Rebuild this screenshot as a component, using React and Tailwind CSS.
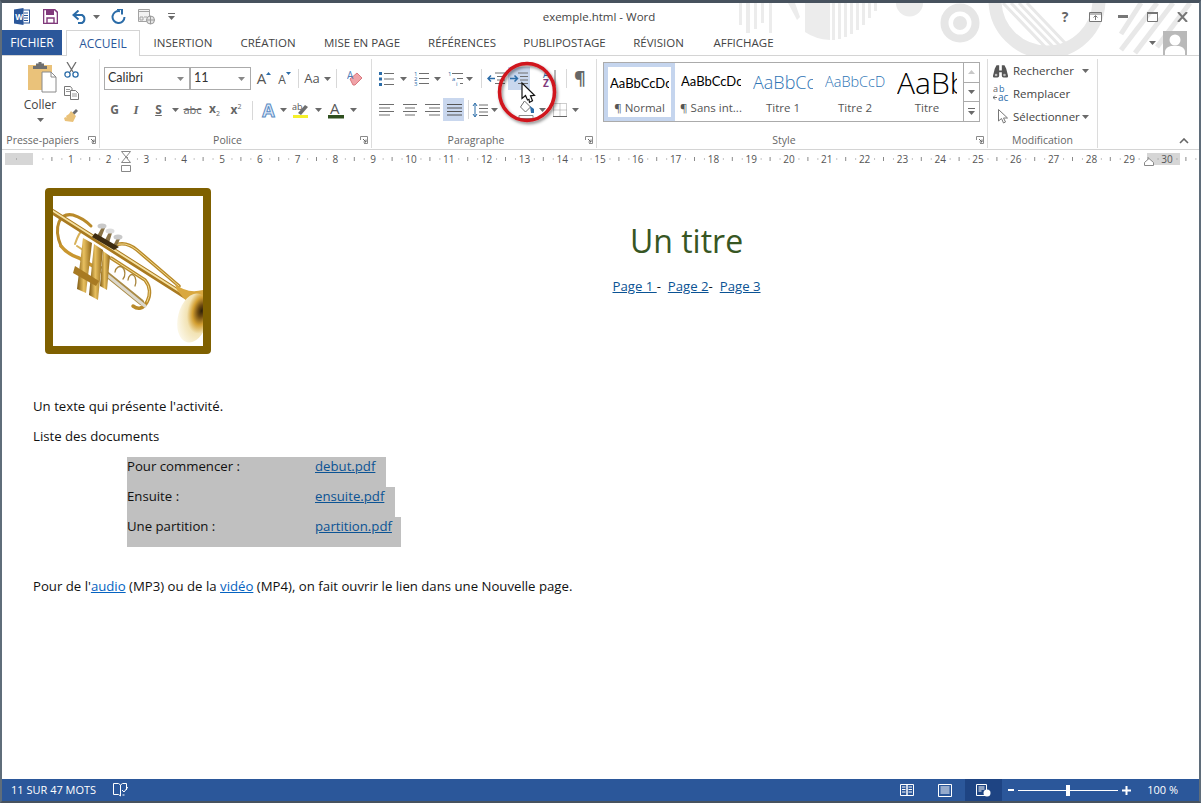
const Caret = ({ c = "#6a6a6a" }) => (
  <svg width="7" height="4" viewBox="0 0 7 4" className="shrink-0"><path d="M0 0h7L3.5 4z" fill={c} /></svg>
);

const Slot = ({ w, children, className = "" }) => (
  <div className={`flex items-center justify-center shrink-0 h-full ${className}`} style={{ width: w }}>{children}</div>
);

const Sep = () => <div className="w-px h-[19px] self-center bg-[#d8d8d8] shrink-0" />;

// paragraph icons are all rows of thin lines
const Lines = ({ rows, stroke = "#6e6e6e" }) => (
  <svg width="16" height="14" viewBox="0 0 16 14">
    {rows.map((r, i) => (
      <path key={i} d={`M${r[0]} ${1.5 + i * 3.5}H${r[1]}`} stroke={stroke} strokeWidth="1" fill="none" />
    ))}
  </svg>
);

function WordIcon() {
  return (
    <svg width="16" height="17" viewBox="0 0 16 17">
      <rect x="6" y="2" width="9.5" height="13" fill="#fff" stroke="#2b579a" />
      <path d="M10 5h4M10 7.5h4M10 10h4M10 12.5h4" stroke="#2b579a" />
      <path d="M0 1.5 9.5 0v17L0 15.5z" fill="#2b579a" />
      <text x="1.2" y="11.5" fontSize="8" fontWeight="700" fill="#fff" fontFamily="Open Sans, sans-serif">W</text>
    </svg>
  );
}

function TitleArt() {
  return (
    <svg className="absolute left-0 top-0 pointer-events-none" width="1197" height="52" viewBox="2 3 1197 52">
      <g fill="#ececec">
        <path d="M739 3h3v22h-3zM746 3h4v30h-4zM754 3h3v26h-3zM761 3h3v20h-3zM769 3h3v30h-3z" />
        <path d="M788 3h7l5 14-3 3z" />
        <path d="M805 3h25v37q-15-1-25-8z" />
        <path d="M832 3h3v37h-3zM838 3h3v36h-3zM844 3h3v34h-3zM850 3h3v31h-3zM856 3h3v27h-3zM862 3h3v22h-3zM868 3h3v15h-3zM874 3h3v8h-3z" />
        <path d="M896 3h27a13 13 0 0 1-27 0z" />
      </g>
      <circle cx="960" cy="23" r="15.5" fill="none" stroke="#e6e6e6" strokeWidth="8" />
      <circle cx="960" cy="23" r="7" fill="#e6e6e6" />
      <circle cx="1047" cy="0" r="52" fill="none" stroke="#e8e8e8" strokeWidth="13" />
      <g stroke="#e8e8e8" strokeWidth="3" fill="none">
        <path d="M1003 3l50 52M1011 3l50 52M1019 3l43 45M1027 3l40 42" />
      </g>
      <g stroke="#e8e8e8" strokeWidth="5" fill="none">
        <path d="M1141 3l-20 31M1157 3l-36 47M1173 3l-38 50M1190 3l-33 44" />
      </g>
    </svg>
  );
}

function TitleBar() {
  return (
    <div className="flex h-[27px] items-center shrink-0 relative">
      <div className="w-[502px] flex items-center shrink-0 h-full">
        <Slot w={38} className="pl-[1px]"><WordIcon /></Slot>
        <Slot w={20}>
          <svg width="15" height="15" viewBox="0 0 15 15">
            <path d="M.5.5h11l3 3v11H.5z" fill="none" stroke="#80397b" strokeWidth="1.6" />
            <path d="M3 1h8v5H3z" fill="#80397b" />
            <path d="M4 9h7v5.5H4z" fill="none" stroke="#80397b" strokeWidth="1.4" />
          </svg>
        </Slot>
        <Slot w={24} className="ml-[8px]">
          <svg width="16" height="14" viewBox="0 0 16 14">
            <path d="M2 5h8a4.5 4.5 0 0 1 0 8H6" fill="none" stroke="#2b6ca8" strokeWidth="2" />
            <path d="M6.5.5 1.5 5l5 4.5" fill="none" stroke="#2b6ca8" strokeWidth="2" />
          </svg>
        </Slot>
        <Slot w={8}><Caret /></Slot>
        <Slot w={20} className="ml-[8px]">
          <svg width="15" height="15" viewBox="0 0 15 15">
            <path d="M9 2.2A6 6 0 1 0 13.5 8" fill="none" stroke="#2b6ca8" strokeWidth="2" />
            <path d="M6 0h5v5.5" fill="none" stroke="#2b6ca8" strokeWidth="2" />
          </svg>
        </Slot>
        <Slot w={20} className="ml-[9px]">
          <svg width="18" height="17" viewBox="0 0 18 17">
            <path d="M.5 1.5h11v12H.5z" fill="#f2f2f2" stroke="#a3a3a3" />
            <path d="M.5 3.5h11M2 9h3v3H2zM6 9h3" stroke="#a3a3a3" fill="none" />
            <circle cx="12.5" cy="12" r="4" fill="#e6e6e6" stroke="#9a9a9a" />
            <path d="M8.5 12h8M12.5 8v8" stroke="#9a9a9a" />
          </svg>
        </Slot>
        <Slot w={12} className="ml-[8px]">
          <svg width="7" height="7" viewBox="0 0 7 7"><path d="M0 0h7v1H0zM0 3h7L3.5 7z" fill="#6a6a6a" /></svg>
        </Slot>
      </div>
      <div className="w-[190px] text-center text-[11.5px] text-[#444] shrink-0 relative">exemple.html - Word</div>
      <div className="flex-1 flex items-center justify-end h-full pr-[11px] relative">
        <span className="w-[20px] text-center text-[14px] font-bold text-[#666]">?</span>
        <Slot w={14} className="ml-[13px]">
          <svg width="13" height="10" viewBox="0 0 13 10"><path d="M.5.5h12v9H.5z" fill="#fff" stroke="#777" /><path d="M.5 2h12M6.5 8V4M4.5 5.5l2-2 2 2" stroke="#777" fill="none" /></svg>
        </Slot>
        <Slot w={10} className="ml-[16px]">
          <svg width="10" height="3" viewBox="0 0 10 3"><path d="M0 0h10v3H0z" fill="#777" /></svg>
        </Slot>
        <Slot w={11} className="ml-[19px]">
          <svg width="11" height="10" viewBox="0 0 11 10"><path d="M.5.5h10v9H.5z" fill="none" stroke="#777" /><path d="M0 0h11v2H0z" fill="#777" /></svg>
        </Slot>
        <Slot w={12} className="ml-[18px]">
          <svg width="11" height="10" viewBox="0 0 11 10"><path d="M1 0l9 10M10 0 1 10" stroke="#777" strokeWidth="2" fill="none" /></svg>
        </Slot>
      </div>
    </div>
  );
}

const tabs = [
  ["INSERTION", 86],
  ["CRÉATION", 84],
  ["MISE EN PAGE", 104],
  ["RÉFÉRENCES", 96],
  ["PUBLIPOSTAGE", 109],
  ["RÉVISION", 79],
  ["AFFICHAGE", 91],
];

function Tabs() {
  return (
    <div className="flex h-[25px] items-stretch shrink-0 relative">
      <div className="w-[60px] bg-[#2b579a] text-white text-[12px] flex items-center justify-center">FICHIER</div>
      <div className="ml-[4px] w-[74px] bg-white border border-b-0 border-[#d4d4d4] text-[#2b579a] text-[12px] flex items-center justify-center h-[26px] z-10">ACCUEIL</div>
      {tabs.map(([t, w]) => (
        <div key={t} className="text-[11.5px] text-[#444] flex items-center justify-center" style={{ width: w }}>{t}</div>
      ))}
      <div className="flex-1 flex items-center justify-end pr-[12px]">
        <Caret />
        <div className="ml-[7px] w-[24px] h-[24px] bg-[#b9b9b9] overflow-hidden">
          <svg width="24" height="24" viewBox="0 0 24 24">
            <circle cx="12" cy="9" r="5.5" fill="#fff" />
            <path d="M2 24v-4q1-4 6-5h8q5 1 6 5v4z" fill="#fff" />
          </svg>
        </div>
      </div>
    </div>
  );
}

function Launcher() {
  return (
    <svg width="8" height="8" viewBox="0 0 8 8" className="absolute right-[3px] top-[3px]">
      <path d="M.5 4V.5H7.5V7.5H4" fill="none" stroke="#8a8a8a" />
      <path d="M3 3l3 3M6 3.5V6H3.5" fill="none" stroke="#666" />
    </svg>
  );
}

function Group({ w, label, launcher, children }) {
  return (
    <div className="flex flex-col shrink-0 h-[89px] mt-[3px] border-r border-[#dcdcdc]" style={{ width: w }}>
      <div className="flex-1 min-h-0">{children}</div>
      <div className={`h-[14px] relative text-center text-[10.5px] leading-[14px] text-[#666] mb-[1px] ${launcher ? "pr-[16px]" : ""}`}>
        {label}
        {launcher && <Launcher />}
      </div>
    </div>
  );
}

function Clipboard() {
  return (
    <div className="flex h-full pl-[16px] pt-[3px]">
      <div className="w-[44px] flex flex-col items-center">
        <svg width="30" height="31" viewBox="0 0 30 31" className="ml-[6px]">
          <path d="M0 3h24v25H0z" fill="#eac27a" />
          <path d="M8 4V1.5h2.5V0h3v1.5H16V4h3v3H5V4z" fill="#6f6f6f" />
          <path d="M14 10h9l5 5v15H14z" fill="#fff" stroke="#8a8a8a" />
          <path d="M23 10v5h5" fill="none" stroke="#8a8a8a" />
        </svg>
        <div className="text-[12px] leading-[16px] text-[#444] mt-[4px]">Coller</div>
        <div className="mt-[5px]"><Caret /></div>
      </div>
      <div className="-ml-[3px] w-[24px] flex flex-col items-center gap-[8px] pt-[0px]">
        <svg width="15" height="16" viewBox="0 0 15 16">
          <path d="M3 0l6 10M12 0 6 10" stroke="#6e6e6e" strokeWidth="1.3" fill="none" />
          <circle cx="3.5" cy="12.5" r="2.6" fill="none" stroke="#2b6ca8" strokeWidth="1.3" />
          <circle cx="11.5" cy="12.5" r="2.6" fill="none" stroke="#2b6ca8" strokeWidth="1.3" />
        </svg>
        <svg width="15" height="14" viewBox="0 0 15 14">
          <path d="M.5.5h6l1.5 2v7H.5z" fill="#fff" stroke="#777" />
          <path d="M6.5 4.5h5l3 3v6h-8z" fill="#fff" stroke="#777" />
          <path d="M2 3.5h4M2 5.5h4M8 8h5M8 10h5" stroke="#999" />
        </svg>
        <svg width="16" height="15" viewBox="0 0 16 15">
          <path d="M9 5l4-4 2 2-4 4z" fill="#6e6e6e" />
          <path d="M8 3l5 5-3 6-8-1-1-3 2-1 1 1-1-2 3-2z" fill="#eac27a" />
        </svg>
      </div>
    </div>
  );
}

function Combo({ w, text }) {
  return (
    <div className="h-[23px] flex items-center border border-[#ababab] bg-white pl-[3px] pr-[5px] text-[12.5px] text-[#333] shrink-0 justify-between font-['Lato',sans-serif]" style={{ width: w }}>
      <span>{text}</span><Caret c="#888" />
    </div>
  );
}

function Police() {
  return (
    <div className="pl-[4px] pt-[8px]">
      <div className="flex h-[23px] items-center">
        <Combo w={86} text="Calibri" />
        <Combo w={61} text="11" />
        <Slot w={22} className="ml-[1px] pl-[2px]">
          <span className="text-[15px] text-[#555]">A</span>
          <svg width="5" height="3" viewBox="0 0 5 3" className="-mt-[10px]"><path d="M0 3h5L2.5 0z" fill="#2b6ca8" /></svg>
        </Slot>
        <Slot w={21}>
          <span className="text-[12px] text-[#555] mt-[3px]">A</span>
          <svg width="5" height="3" viewBox="0 0 5 3" className="-mt-[10px]"><path d="M0 0h5L2.5 3z" fill="#2b6ca8" /></svg>
        </Slot>
        <div className="w-[3px]" /><Sep />
        <Slot w={37} className="gap-[4px]">
          <span className="text-[13px] text-[#555]">Aa</span><Caret />
        </Slot>
        <Sep />
        <Slot w={30} className="pl-[5px]">
          <svg width="16" height="17" viewBox="0 0 16 17">
            <path d="M3 9l7-6 5 5-7 7-2 0z" fill="#f0a3a8" stroke="#d9777e" />
            <text x="0" y="9" fontSize="10" fill="#4d7db8" fontFamily="Open Sans, sans-serif">A</text>
          </svg>
        </Slot>
      </div>
      <div className="flex h-[20px] items-center mt-[10px] text-[#666]">
        <Slot w={21}><span className="text-[12px] font-bold">G</span></Slot>
        <Slot w={22}><span className="text-[13px] italic font-['Liberation_Serif',serif] font-bold">I</span></Slot>
        <Slot w={23}><span className="text-[12px] font-bold underline">S</span></Slot>
        <Slot w={11}><Caret /></Slot>
        <Slot w={23}><span className="text-[11px] line-through">abc</span></Slot>
        <Slot w={21}><span className="text-[12px] font-bold">x<span className="text-[7px] font-normal align-sub">2</span></span></Slot>
        <Slot w={22}><span className="text-[12px] font-bold">x<span className="text-[7px] font-normal align-super">2</span></span></Slot>
        <div className="w-[5px]" /><Sep />
        <Slot w={26} className="pl-[5px]">
          <span className="text-[18px] leading-none font-bold text-[#dfeaf8] [-webkit-text-stroke:1px_#5b8cc4]">A</span>
        </Slot>
        <Slot w={9}><Caret /></Slot>
        <Slot w={26}>
          <svg width="18" height="18" viewBox="0 0 18 18">
            <text x="0" y="9" fontSize="9" fill="#555" fontFamily="Open Sans, sans-serif">ab</text>
            <path d="M6 12l7-8 3 2-7 8z" fill="#6e6e6e" />
            <path d="M1 14h15v3H1z" fill="#f5f02a" />
          </svg>
        </Slot>
        <Slot w={9}><Caret /></Slot>
        <Slot w={26}>
          <svg width="16" height="18" viewBox="0 0 16 18">
            <text x="2" y="13" fontSize="15" fill="#555" fontFamily="Open Sans, sans-serif">A</text>
            <path d="M0 14h16v3.5H0z" fill="#2f4f1f" />
          </svg>
        </Slot>
        <Slot w={9}><Caret /></Slot>
      </div>
    </div>
  );
}

const BulletIcon = () => (
  <svg width="15" height="14" viewBox="0 0 15 14">
    <path d="M0 0h3v3H0zM0 5.5h3v3H0zM0 11h3v3H0z" fill="#2b6ca8" />
    <path d="M5 1.5h10M5 7h10M5 12.5h10" stroke="#6e6e6e" />
  </svg>
);
const NumIcon = () => (
  <svg width="15" height="15" viewBox="0 0 15 15">
    <text x="0" y="5" fontSize="6" fill="#2b6ca8" fontFamily="Open Sans, sans-serif">1</text>
    <text x="0" y="10" fontSize="6" fill="#2b6ca8" fontFamily="Open Sans, sans-serif">2</text>
    <text x="0" y="15" fontSize="6" fill="#2b6ca8" fontFamily="Open Sans, sans-serif">3</text>
    <path d="M5 2.5h10M5 7.5h10M5 12.5h10" stroke="#6e6e6e" />
  </svg>
);
const MultiIcon = () => (
  <svg width="15" height="15" viewBox="0 0 15 15">
    <text x="0" y="5" fontSize="6" fill="#2b6ca8" fontFamily="Open Sans, sans-serif">1</text>
    <text x="4" y="10" fontSize="6" fill="#2b6ca8" fontFamily="Open Sans, sans-serif">a</text>
    <text x="8" y="15" fontSize="6" fill="#2b6ca8" fontFamily="Open Sans, sans-serif">i</text>
    <path d="M4 2.5h11M9 7.5h6M12 12.5h3" stroke="#6e6e6e" />
  </svg>
);
const IndentIcon = ({ flip }) => (
  <svg width="18" height="13" viewBox="0 0 18 13">
    {flip ? (
      <>
        <path d="M8 1h10M10 4.5h8M10 8h8M8 11.5h10" stroke="#6e6e6e" />
        <path d="M8 6.5H1M4 3.5l-3 3 3 3" stroke="#2b6ca8" strokeWidth="1.5" fill="none" />
      </>
    ) : (
      <>
        <path d="M8 1h10M10 4.5h8M10 8h8M8 11.5h10" stroke="#6e6e6e" />
        <path d="M0 6.5h7M4.5 3.5l3 3-3 3" stroke="#2b6ca8" strokeWidth="1.5" fill="none" />
      </>
    )}
  </svg>
);

function Paragraphe() {
  return (
    <div className="pl-[4px] pt-[8px]">
      <div className="flex h-[23px] items-center">
        <Slot w={20}><BulletIcon /></Slot>
        <Slot w={10} className="ml-[2px]"><Caret /></Slot>
        <Slot w={20} className="ml-[3px]"><NumIcon /></Slot>
        <Slot w={10} className="ml-[1px]"><Caret /></Slot>
        <Slot w={20} className="ml-[3px]"><MultiIcon /></Slot>
        <Slot w={8}><Caret /></Slot>
        <div className="w-[8px]" /><Sep />
        <Slot w={22} className="ml-[3px]"><IndentIcon flip /></Slot>
        <Slot w={22} className="ml-[1px] bg-[#c9d7ee]"><IndentIcon /></Slot>
        <Slot w={22} className="ml-[7px]">
          <svg width="16" height="18" viewBox="0 0 16 18">
            <text x="3" y="8" fontSize="10" fill="#2b6ca8" fontFamily="Open Sans, sans-serif">A</text>
            <text x="3" y="17" fontSize="10" fontWeight="700" fill="#80397b" fontFamily="Open Sans, sans-serif">Z</text>
            <path d="M15 0v16" stroke="#6e6e6e" />
          </svg>
        </Slot>
        <div className="w-[7px]" /><Sep />
        <Slot w={20} className="ml-[3px]"><span className="text-[18px] text-[#666] font-bold">¶</span></Slot>
      </div>
      <div className="flex h-[23px] items-center mt-[8px]">
        <Slot w={22}><Lines rows={[[0, 15], [0, 11], [0, 15], [0, 11]]} /></Slot>
        <Slot w={23}><Lines rows={[[1, 15], [3, 13], [1, 15], [3, 13]]} /></Slot>
        <Slot w={22}><Lines rows={[[1, 16], [5, 16], [1, 16], [5, 16]]} /></Slot>
        <Slot w={21} className="bg-[#c9d7ee]"><Lines rows={[[1, 16], [1, 16], [1, 16], [1, 16]]} stroke="#555" /></Slot>
        <div className="w-[4px]" /><Sep />
        <Slot w={21}>
          <svg width="16" height="16" viewBox="0 0 16 16">
            <path d="M3 2v12M1 4l2-3 2 3M1 12l2 3 2-3" stroke="#2b6ca8" fill="none" />
            <path d="M7 3h9M7 6.5h9M7 10h9M7 13.5h9" stroke="#6e6e6e" />
          </svg>
        </Slot>
        <Slot w={9}><Caret /></Slot>
        <Slot w={22} className="ml-[17px]">
          <svg width="18" height="20" viewBox="0 0 18 20">
            <path d="M6.5 1l6 6-5 5-5-5z" fill="#fff" stroke="#6e6e6e" />
            <path d="M12 6l4 3v4h-3z" fill="#2b6ca8" />
            <path d="M1 15.5h14v3H1z" fill="#fff" stroke="#8a8a8a" />
          </svg>
        </Slot>
        <Slot w={9}><Caret /></Slot>
        <Slot w={22} className="ml-[2px]">
          <svg width="14" height="14" viewBox="0 0 14 14">
            <path d="M.5.5h13v13H.5zM7 .5v13M.5 7h13" fill="none" stroke="#9a9a9a" strokeDasharray="1 1" />
            <path d="M0 13.5h14" stroke="#666" />
          </svg>
        </Slot>
        <Slot w={9}><Caret /></Slot>
      </div>
    </div>
  );
}

const styles = [
  { name: "¶ Sans int...", cls: "text-[13px] text-black font-['Lato',sans-serif]" },
  { name: "Titre 1", cls: "text-[18px] font-light text-[#2e74b5]" },
  { name: "Titre 2", cls: "text-[14.5px] font-light text-[#2e74b5]" },
  { name: "Titre", cls: "text-[30px] font-light text-black" },
];

function Styles() {
  return (
    <div className="pl-[6px] pt-[3px]">
      <div className="w-[377px] h-[60px] border border-[#ababab] flex bg-white">
        <div className="w-[71px] h-full border-[4px] border-[#c5d5ee] flex flex-col items-center overflow-hidden shrink-0">
          <div className="h-[34px] w-[59px] overflow-hidden flex items-center text-[13px] text-black whitespace-nowrap font-['Lato',sans-serif]">AaBbCcDc</div>
          <div className="text-[11.5px] text-[#555] leading-[14px]">¶ Normal</div>
        </div>
        {styles.map((s) => (
          <div key={s.name} className="w-[72px] flex flex-col items-center shrink-0">
            <div className="h-[38px] w-full px-[6px]">
              <div className={`h-full w-full overflow-hidden flex items-center whitespace-nowrap ${s.cls}`}>AaBbCcDc</div>
            </div>
            <div className="text-[11.5px] text-[#555] leading-[14px]">{s.name}</div>
          </div>
        ))}
        <div className="flex-1 border-l border-[#ababab] flex flex-col">
          <div className="flex-1 flex items-center justify-center border-b border-[#ababab]">
            <svg width="7" height="4" viewBox="0 0 7 4"><path d="M0 4h7L3.5 0z" fill="#c8c8c8" /></svg>
          </div>
          <div className="flex-1 flex items-center justify-center border-b border-[#ababab]"><Caret /></div>
          <div className="flex-1 flex items-center justify-center">
            <svg width="7" height="7" viewBox="0 0 7 7"><path d="M0 0h7v1H0zM0 3h7L3.5 7z" fill="#6a6a6a" /></svg>
          </div>
        </div>
      </div>
    </div>
  );
}

function Modification() {
  return (
    <div className="pl-[5px] text-[11.5px] text-[#444]">
      <div className="flex items-center h-[23px]">
        <svg width="15" height="14" viewBox="0 0 17 15" className="mr-[5px]">
          <path d="M2 5 4 1h3v6h3V1h3l2 4 2 8a2 2 0 0 1-1 2h-4a2 2 0 0 1-2-2V9H7v4a2 2 0 0 1-2 2H1a2 2 0 0 1-1-2z" fill="#555" />
          <circle cx="3.5" cy="12" r="1.5" fill="#bbb" /><circle cx="13" cy="12" r="1.5" fill="#bbb" />
        </svg>
        <span>Rechercher</span><span className="ml-[8px]"><Caret /></span>
      </div>
      <div className="flex items-center h-[23px]">
        <svg width="17" height="17" viewBox="0 0 17 17" className="mr-[3px]">
          <text x="0" y="7" fontSize="9" fill="#666" fontFamily="Open Sans, sans-serif">a</text>
          <text x="6" y="7" fontSize="9" fill="#2b6ca8" fontFamily="Open Sans, sans-serif">b</text>
          <text x="5" y="16" fontSize="10" fill="#2b6ca8" fontFamily="Open Sans, sans-serif">ac</text>
          <path d="M0 12.5h4M2 10.5l-2 2 2 2" stroke="#6e6e6e" fill="none" />
        </svg>
        <span>Remplacer</span>
      </div>
      <div className="flex items-center h-[23px]">
        <svg width="12" height="15" viewBox="0 0 12 15" className="ml-[5px] mr-[3px]">
          <path d="M.5.5v11.5l3-2.5 2 4.5 2-1-2-4h4z" fill="#fff" stroke="#777" />
        </svg>
        <span>Sélectionner</span><span className="ml-[2px]"><Caret /></span>
      </div>
    </div>
  );
}

function Ribbon() {
  return (
    <div className="flex h-[95px] shrink-0 border-t border-b border-[#d4d4d4] bg-white relative">
      <Group w={98} label="Presse-papiers" launcher><Clipboard /></Group>
      <Group w={272} label="Police" launcher><Police /></Group>
      <Group w={225} label="Paragraphe" launcher><Paragraphe /></Group>
      <Group w={391} label="Style" launcher><Styles /></Group>
      <Group w={110} label="Modification"><Modification /></Group>
      <div className="flex-1 flex items-end justify-end pr-[10px] pb-[5px]">
        <svg width="10" height="6" viewBox="0 0 10 6"><path d="M1 5l4-4 4 4" fill="none" stroke="#666" strokeWidth="1.6" /></svg>
      </div>
    </div>
  );
}

const cm = Array.from({ length: 30 }, (_, i) => i + 1);

function Ruler() {
  const origin = 31;
  const step = 37.8;
  return (
    <div className="h-[20px] shrink-0 bg-white relative">
      <svg width="1197" height="20" viewBox="0 0 1197 20" className="block">
        <rect x="3" y="3" width="1175" height="12" fill="#fff" />
        <rect x="3" y="3" width="28" height="12" fill="#d6d6d6" />
        <rect x="1145" y="3" width="33" height="12" fill="#d6d6d6" />
        {Array.from({ length: 31 }, (_, i) => i).map((i) => {
          const x = origin + i * step;
          return (
            <g key={i} fill="#8a8a8a">
              <rect x={x + step * 0.25} y="8.5" width="1" height="1" />
              <rect x={x + step * 0.5 - 0.5} y="7" width="1" height="4" />
              <rect x={x + step * 0.75} y="8.5" width="1" height="1" />
            </g>
          );
        })}
        {cm.map((n) => (
          <text key={n} x={origin + n * step} y="13" fontSize="10" fill="#555" textAnchor="middle" fontFamily="Open Sans, sans-serif">{n}</text>
        ))}
        <rect x="14" y="8.5" width="1" height="1" fill="#8a8a8a" />
      </svg>
      <svg width="10" height="21" viewBox="0 0 10 21" className="absolute left-[119px] top-[1px]">
        <path d="M.5.5h9L5 6l4.5 5.5h-9L5 6z" fill="#fff" stroke="#888" />
        <path d="M.5 14.5h9v6h-9z" fill="#fff" stroke="#888" />
      </svg>
      <svg width="10" height="8" viewBox="0 0 10 8" className="absolute left-[1142px] top-[8px]">
        <path d="M.5 7.5v-3L5 .5l4.5 4v3z" fill="#fff" stroke="#888" />
      </svg>
    </div>
  );
}

function Trumpet() {
  return (
    <svg viewBox="0 0 150 150" className="w-full h-full block">
      <defs>
        <linearGradient id="gold" x1="0" y1="0" x2="1" y2="0">
          <stop offset="0" stopColor="#7d5810" />
          <stop offset="0.45" stopColor="#e8c060" />
          <stop offset="1" stopColor="#8f6515" />
        </linearGradient>
        <radialGradient id="bell" cx="0.72" cy="0.32" r="0.75">
          <stop offset="0" stopColor="#2e2008" />
          <stop offset="0.16" stopColor="#6d4a10" />
          <stop offset="0.38" stopColor="#d39f32" />
          <stop offset="0.62" stopColor="#f2e3b4" />
          <stop offset="1" stopColor="#fbf6e4" />
        </radialGradient>
      </defs>
      <g fill="none" strokeLinecap="round">
        <path d="M8 50Q2 36 6 26 10 17 20 19 30 22 38 30" stroke="#b98a2a" strokeWidth="3" />
        <path d="M8 50Q14 58 26 62L40 70" stroke="#c9962f" strokeWidth="3.5" />
        <path d="M22 48Q26 36 30 34M24 50 36 58" stroke="#d8b25a" strokeWidth="2" />
        <path d="M58 62 92 84Q100 94 94 106 88 116 80 110" stroke="#b98a2a" strokeWidth="3.5" />
        <path d="M58 62 92 84Q100 94 94 106" stroke="#f2da90" strokeWidth="1" />
        <path d="M46 72 88 106" stroke="#a98a45" strokeWidth="6" />
        <path d="M48 74 92 110" stroke="#dcd8cc" strokeWidth="3" />
        <path d="M60 50Q72 44 84 54L126 90" stroke="#b98a2a" strokeWidth="3.5" />
        <path d="M60 50Q72 44 84 54L126 90" stroke="#f2da90" strokeWidth="1" />
        <path d="M0 16 132 100" stroke="#a97a20" strokeWidth="5.5" />
        <path d="M0 15 132 99" stroke="#f6e2a2" strokeWidth="1.8" />
        <path d="M62 76a5 7 0 1 1 8 7M75 84a4 7 0 1 1 7 6" stroke="#a8853c" strokeWidth="1.3" />
      </g>
      <path d="M30 42l9 5-6 50-9-4z" fill="url(#gold)" />
      <path d="M41 48l9 6-5 50-9-5z" fill="url(#gold)" />
      <path d="M50 55l7 5-3 34-7-4z" fill="url(#gold)" />
      <path d="M22 70l24 15-3 5-23-13z" fill="#a87a22" />
      <path d="M44 40l5-9 3 1-4 10zM52 44l4-8 3 1-3 10zM60 50l4-8 3 1-4 9z" fill="#8a7345" />
      <ellipse cx="49" cy="30" rx="4.5" ry="2.6" fill="#c9c9c9" />
      <ellipse cx="57" cy="35" rx="4.5" ry="2.6" fill="#dcdcdc" />
      <ellipse cx="65" cy="41" rx="4.5" ry="2.6" fill="#c9c9c9" />
      <path d="M42 37l24 14-5 3-22-13z" fill="#3e2c10" />
      <path d="M122 88Q134 98 150 94v24q-14-8-26-24z" fill="#d9a83f" />
      <ellipse cx="140" cy="122" rx="15" ry="25" transform="rotate(14 140 122)" fill="url(#bell)" />
    </svg>
  );
}

const Link = ({ children, bright }) => (
  <a href="#" className={`underline ${bright ? "text-[#0563c1]" : "text-[#0b5394]"}`}>{children}</a>
);

function Doc() {
  return (
    <div className="flex-1 bg-white pl-[31px] text-[13.2px] leading-[20px] text-[#111] min-h-0">
      <div className="flex pt-[18px]">
        <div className="w-[166px] h-[166px] ml-[12px] border-[8px] border-[#7f6000] rounded-[4px] shrink-0 bg-white overflow-hidden">
          <Trumpet />
        </div>
        <div className="flex-1 flex flex-col items-center pr-[37px]">
          <h1 className="text-[32px] leading-[44px] text-[#375623] mt-[31px]">Un titre</h1>
          <div className="mt-[13px]">
            <Link>Page 1 </Link> - &nbsp;<Link>Page 2</Link>- &nbsp;<Link>Page 3</Link>
          </div>
        </div>
      </div>
      <p className="mt-[42px]">Un texte qui présente l'activité.</p>
      <p className="mt-[10px]">Liste des documents</p>
      <div className="mt-[11px] ml-[94px] flex flex-col items-start">
        {[
          ["Pour commencer :", "debut.pdf", 259],
          ["Ensuite :", "ensuite.pdf", 268],
          ["Une partition :", "partition.pdf", 274],
        ].map(([a, b, w]) => (
          <div key={b} className="h-[30px] bg-[#c0c0c0] flex" style={{ width: w }}>
            <span className="w-[188px] shrink-0 leading-[18px]">{a}</span>
            <span className="leading-[18px]"><Link>{b}</Link></span>
          </div>
        ))}
      </div>
      <p className="mt-[29px]">
        Pour de l'<Link bright>audio</Link> (MP3) ou de la <Link bright>vidéo</Link> (MP4), on fait ouvrir le lien dans une Nouvelle page.
      </p>
    </div>
  );
}

function StatusBar() {
  return (
    <div className="h-[22px] shrink-0 bg-[#2b579a] flex items-center text-white text-[11px] pl-[9px]">
      <span className="w-[102px]">11 SUR 47 MOTS</span>
      <svg width="15" height="14" viewBox="0 0 15 14">
        <path d="M.5.5h5l2 1.5v11l-2-1.5h-5zM7.5 2v11M7.5 2l2-1.5h4V7M9.5 12h2" fill="none" stroke="#fff" />
        <path d="M9 7l2 2 4-5" fill="none" stroke="#fff" />
      </svg>
      <div className="flex-1" />
      <Slot w={14} className="mr-[24px]">
        <svg width="14" height="12" viewBox="0 0 14 12">
          <path d="M.5.5H7v11H.5zM7 .5h6.5v11H7z" fill="none" stroke="#fff" />
          <path d="M2 3h3.5M2 5.5h3.5M2 8h3.5M8.5 3H12M8.5 5.5H12M8.5 8H12" stroke="#fff" />
        </svg>
      </Slot>
      <Slot w={14}>
        <svg width="14" height="13" viewBox="0 0 14 13">
          <path d="M.5.5h13v12H.5z" fill="none" stroke="#fff" />
          <path d="M2.5 3h9M2.5 5h9M2.5 7h9M2.5 9h9" stroke="#fff" />
        </svg>
      </Slot>
      <Slot w={37} className="bg-[#1e4483] ml-[13px] mr-[6px]">
        <svg width="15" height="13" viewBox="0 0 15 13">
          <path d="M.5.5h10v11H.5z" fill="none" stroke="#fff" />
          <path d="M2.5 3h6M2.5 5h6M2.5 7h3" stroke="#fff" />
          <circle cx="11" cy="9" r="3.5" fill="#fff" />
        </svg>
      </Slot>
      <span className="w-[6px] h-[2px] bg-white" />
      <div className="w-[100px] h-[1px] bg-white ml-[4px] relative">
        <span className="absolute left-[48px] -top-[5px] w-[4px] h-[11px] bg-white" />
      </div>
      <svg width="9" height="9" viewBox="0 0 9 9" className="ml-[4px]"><path d="M0 4.5h9M4.5 0v9" stroke="#fff" strokeWidth="2" /></svg>
      <span className="ml-[16px] mr-[21px]">100 %</span>
    </div>
  );
}

export default function App() {
  return (
    <div className="w-[1201px] h-[803px] overflow-hidden bg-white border-x-2 border-t-[3px] border-b-2 border-x-[#5f6d7a] border-t-[#47525e] border-b-[#47525e] flex flex-col relative font-['Open_Sans',sans-serif]">
      <div className="relative shrink-0">
        <TitleArt />
        <TitleBar />
        <Tabs />
      </div>
      <Ribbon />
      <Ruler />
      <Doc />
      <StatusBar />
      {/* red circle and pointer from the tutorial, sit over the ribbon */}
      <svg width="76" height="74" viewBox="0 0 76 74" className="absolute left-[488px] top-[53px] pointer-events-none">
        <defs>
          <filter id="sh" x="-20%" y="-20%" width="140%" height="140%">
            <feDropShadow dx="1.5" dy="2" stdDeviation="1.5" floodColor="#000" floodOpacity="0.45" />
          </filter>
        </defs>
        <ellipse cx="37" cy="36" rx="27.5" ry="28.5" fill="none" stroke="#d0121b" strokeWidth="3.5" filter="url(#sh)" />
        <path d="M32 27v15.5l3.5-3 2 4.5 1.5-.7.5 3 3-1.5-2-5 4-.5z" fill="#fff" stroke="#111" strokeWidth="1.2" />
      </svg>
    </div>
  );
}
